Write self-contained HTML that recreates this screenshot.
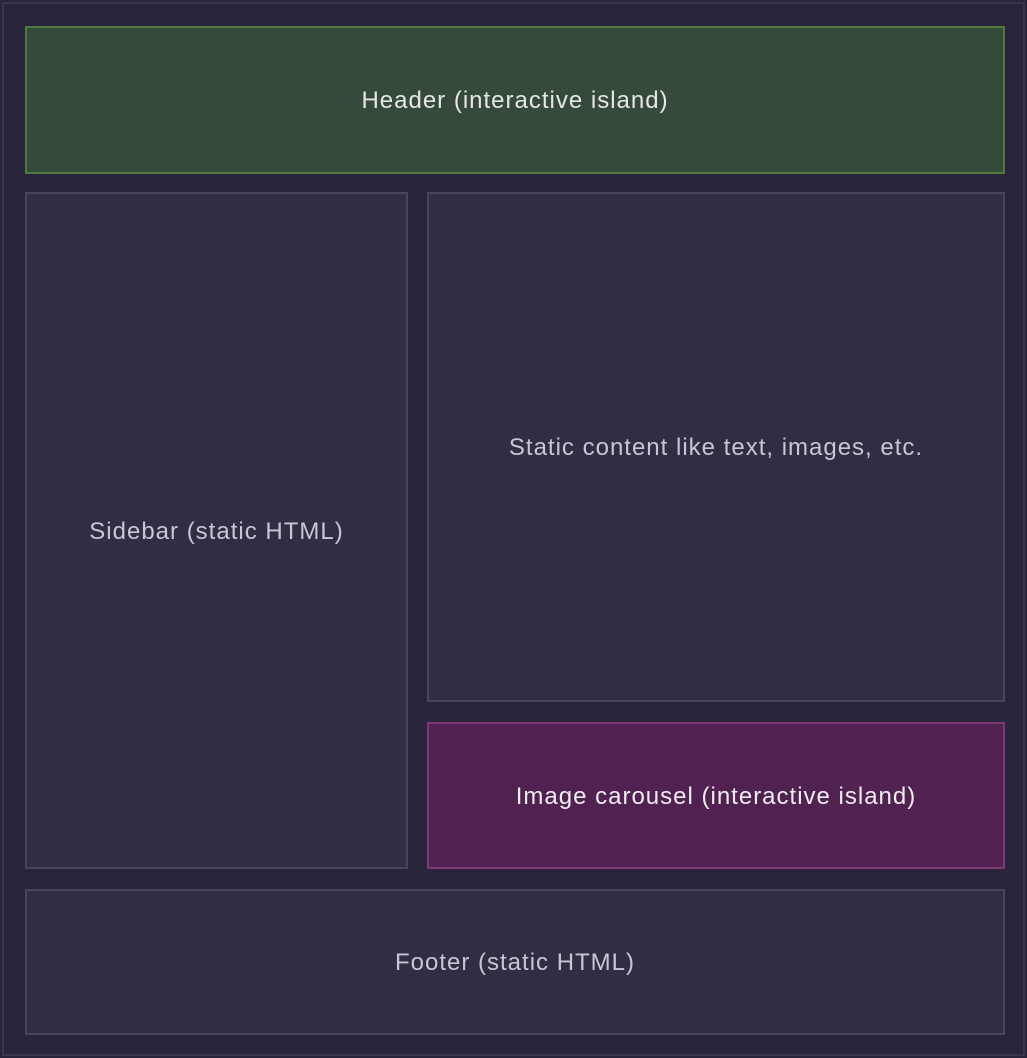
<!DOCTYPE html>
<html><head><meta charset="utf-8"><style>
html,body{margin:0;padding:0;}
body{width:1027px;height:1058px;background:#29233b;position:relative;overflow:hidden;font-family:"Liberation Sans",sans-serif;}
.outer{position:absolute;left:2px;top:2px;width:1019px;height:1050px;border:2px solid #3a3450;}
.b{position:absolute;box-sizing:border-box;border:2px solid #49445c;background:#322c44;color:#c9c5d4;font-size:24px;letter-spacing:1px;display:flex;align-items:center;justify-content:center;padding-top:2px;}
.h{background:#354a3b;border-color:#4f7a3c;color:#e6e6e6;}
.c{background:#512152;border-color:#7a3a74;color:#eeeeee;}
</style></head><body>
<div class="outer"></div>
<div class="b h" style="left:25px;top:26px;width:980px;height:148px">Header (interactive island)</div>
<div class="b" style="left:25px;top:192px;width:383px;height:677px">Sidebar (static HTML)</div>
<div class="b" style="left:427px;top:192px;width:578px;height:510px">Static content like text, images, etc.</div>
<div class="b c" style="left:427px;top:722px;width:578px;height:147px">Image carousel (interactive island)</div>
<div class="b" style="left:25px;top:889px;width:980px;height:146px">Footer (static HTML)</div>
</body></html>
